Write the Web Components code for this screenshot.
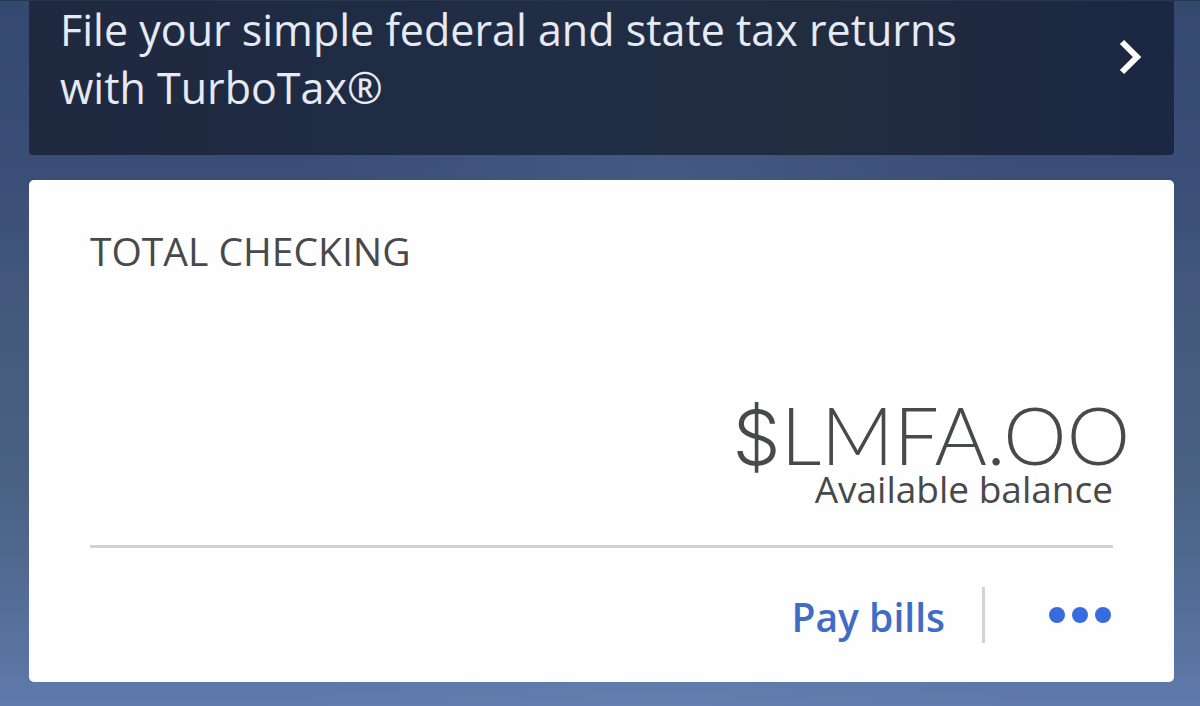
<!DOCTYPE html>
<html lang="en">
<head>
<meta charset="utf-8">
<meta name="viewport" content="width=device-width, initial-scale=1">
<title>Accounts</title>
<style>
  html { min-height: 100%; background: #4b6488; }
  body { margin: 0; font-family: "Open Sans", "Noto Sans", sans-serif; }
</style>
</head>
<body>
<accounts-screen>
  <promo-banner href="#taxes">File your simple federal and state tax returns with TurboTax®</promo-banner>
  <account-card currency="$">
    <span slot="name">TOTAL CHECKING</span>
    <span slot="balance">LMFA.OO</span>
    <span slot="caption">Available balance</span>
    <card-actions slot="actions">Pay bills</card-actions>
  </account-card>
</accounts-screen>
<script>
class ShadowElement extends HTMLElement {
  constructor() {
    super();
    this.attachShadow({ mode: "open" }).innerHTML = this.constructor.markup;
  }
}

customElements.define("accounts-screen", class extends ShadowElement {
  static markup = `
    <style>
      :host {
        display: block; box-sizing: border-box; min-height: 100vh;
        padding: 0 26px 23px 29px;
        border-top: 1px solid #29364e;
        background:
          linear-gradient(90deg, transparent 25%, rgba(120, 150, 190, .16) 55%, transparent 85%),
          linear-gradient(180deg, #34496f 0, #3a4e77 25%, #445a7c 45%, #4a6284 70%, #566f9b 88%, #607aab 100%);
      }
      main { display: flex; flex-direction: column; gap: 25px; }
    </style>
    <main><slot></slot></main>`;
});

customElements.define("promo-banner", class extends ShadowElement {
  static markup = `
    <style>
      :host { display: block; }
      a {
        display: flex; align-items: flex-start; justify-content: space-between;
        padding: 0 32px 38px 31px; border-radius: 0 0 4px 4px;
        background: linear-gradient(90deg, #1f2940, #202d45 45%, #222c3f 70%, #1b2743);
        color: #e6eaf5; font-size: 43px; line-height: 58px; text-decoration: none;
      }
      p { margin: 0; max-width: 960px; }
      svg { flex: none; width: 24px; height: 38px; margin-top: 37px; }
    </style>
    <a>
      <p><slot></slot></p>
      <svg viewBox="0 0 24 38" aria-hidden="true"><path d="M4 4 L19 19 L4 34" fill="none" stroke="#fff" stroke-width="6"/></svg>
    </a>`;
  connectedCallback() {
    this.shadowRoot.querySelector("a").href = this.getAttribute("href");
  }
});

customElements.define("account-card", class extends ShadowElement {
  static markup = `
    <style>
      :host { display: block; }
      section {
        padding: 43px 61px 39px; border-radius: 5px;
        background: #fefefe; color: #48494b;
      }
      h2 { margin: 0; font-size: 39px; font-weight: 400; line-height: 56px; }
      dl { display: flex; flex-direction: column; align-items: flex-end; margin: 119px 0 37px; }
      dd { order: -1; margin: 0 -17px 0 0; height: 72px; font: 300 80px/72px Lato, sans-serif; }
      .currency { font: 300 76px/72px Inter, sans-serif; }
      dt { font-size: 37px; line-height: 38px; }
      footer { border-top: 3px solid #d2d2d2; padding-top: 39px; }
    </style>
    <section>
      <h2><slot name="name"></slot></h2>
      <dl>
        <dt><slot name="caption"></slot></dt>
        <dd><span class="currency"></span><slot name="balance"></slot></dd>
      </dl>
      <footer><slot name="actions"></slot></footer>
    </section>`;
  connectedCallback() {
    this.shadowRoot.querySelector(".currency").textContent = this.getAttribute("currency");
  }
});

customElements.define("card-actions", class extends ShadowElement {
  static markup = `
    <style>
      :host { display: flex; justify-content: flex-end; align-items: center; }
      button { margin: 0; padding: 0; border: 0; background: none; color: #416bc4; cursor: pointer; }
      .pay { font: 600 39px/52px "Open Sans", "Noto Sans", sans-serif; padding: 4px 37px 0 0; }
      .more { display: flex; align-items: center; height: 56px; padding-left: 64px; border-left: 3px solid #d2d2d2; }
      svg { width: 64px; height: 16px; fill: #376be0; }
    </style>
    <button class="pay" type="button"><slot></slot></button>
    <button class="more" type="button" aria-label="More actions">
      <svg viewBox="0 0 64 16" aria-hidden="true"><circle cx="8" cy="8" r="8"/><circle cx="31" cy="8" r="8"/><circle cx="54" cy="8" r="8"/></svg>
    </button>`;
});
</script>
</body>
</html>
